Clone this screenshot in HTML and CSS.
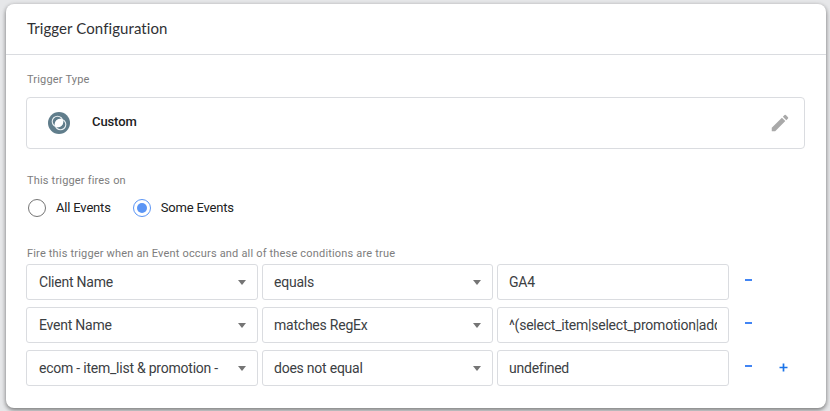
FILE: index.html
```html
<!DOCTYPE html>
<html lang="en">
<head>
<meta charset="utf-8">
<title>Trigger Configuration</title>
<link rel="stylesheet" href="styles.css">
</head>
<body>
<main class="card">
  <header class="card-header"><h1 class="title">Trigger Configuration</h1></header>
  <div class="card-body">
    <div class="label">Trigger Type</div>
    <div class="type-box">
      <svg class="type-icon" width="22" height="22" viewBox="0 0 22 22">
        <circle cx="11" cy="11" r="11" fill="#607d8b"/>
        <circle cx="12.5" cy="12.5" r="5.3" fill="none" stroke="#e8eef0" stroke-width="1.1"/>
        <circle cx="9.5" cy="9.5" r="5.3" fill="none" stroke="#e8eef0" stroke-width="1.1"/>
        <path d="M14.5 7.5A5.2 5.2 0 0 1 7.5 14.5A5.2 5.2 0 0 1 14.5 7.5Z" fill="#fff"/>
      </svg>
      <span class="type-name">Custom</span>
      <svg class="edit-icon" width="22" height="22" viewBox="0 0 24 24"><path fill="#a9a9a9" d="M3 17.25V21h3.75L17.81 9.94l-3.75-3.75L3 17.25zM20.71 7.04a1 1 0 0 0 0-1.41l-2.34-2.34a1 1 0 0 0-1.41 0l-1.83 1.83 3.75 3.75 1.83-1.83z"/></svg>
    </div>
    <div class="label fires-label">This trigger fires on</div>
    <div class="radios">
      <div class="radio"><span class="ring"></span><span>All Events</span></div>
      <div class="radio"><span class="ring ring-on"></span><span>Some Events</span></div>
    </div>
    <div class="label cond-label">Fire this trigger when an Event occurs and all of these conditions are true</div>
    <div class="conditions">
      <div class="row">
        <div class="field select"><span class="value">Client Name</span><i class="arrow"></i></div>
        <div class="field select"><span class="value">equals</span><i class="arrow"></i></div>
        <div class="field"><span class="value">GA4</span></div>
        <span class="minus"></span>
      </div>
      <div class="row">
        <div class="field select"><span class="value">Event Name</span><i class="arrow"></i></div>
        <div class="field select"><span class="value">matches RegEx</span><i class="arrow"></i></div>
        <div class="field"><span class="value">^(select_item|select_promotion|add</span></div>
        <span class="minus"></span>
      </div>
      <div class="row">
        <div class="field select"><span class="value">ecom - item_list &amp; promotion -</span><i class="arrow"></i></div>
        <div class="field select"><span class="value">does not equal</span><i class="arrow"></i></div>
        <div class="field"><span class="value">undefined</span></div>
        <span class="minus"></span>
        <svg class="plus" width="9" height="9" viewBox="0 0 9 9"><path d="M4.5 0.5v8M0.5 4.5h8" stroke="#1a73e8" stroke-width="1.7"/></svg>
      </div>
    </div>
  </div>
</main>
</body>
</html>
```
FILE: styles.css
```css
* { box-sizing: border-box; }
body {
  margin: 0;
  height: 411px;
  overflow: hidden;
  padding: 4px 4px 3px 5.5px;
  background: #e6e7e9;
  font-family: Roboto, "Liberation Sans", sans-serif;
  color: #212121;
}
.card {
  height: 404px;
  background: #fff;
  border-radius: 8px;
  box-shadow: 0 2px 4px rgba(0, 0, 0, .4), 0 1px 5px rgba(0, 0, 0, .15);
}
.card-header {
  height: 51px;
  padding: 14px 0 0 21.5px;
  border-bottom: 1px solid #dadce0;
}
.title {
  margin: 0;
  font: 400 15px/20px Lato, Roboto, sans-serif;
  letter-spacing: .08px;
  color: #303134;
}
.card-body { padding: 17px 21px 0 20.5px; }
.label {
  padding-left: 1px;
  font-size: 11px;
  line-height: 16px;
  letter-spacing: .18px;
  color: #7d7d7d;
}
.type-box {
  display: flex;
  align-items: center;
  width: 779px;
  height: 52px;
  margin-top: 9px;
  padding: 0 13.5px 0 21px;
  border: 1px solid #dadce0;
  border-radius: 4px;
}
.type-icon { margin-right: 22px; }
.type-name { font-size: 13px; font-weight: 500; line-height: 18px; letter-spacing: -.1px; margin-top: -3px; }
.edit-icon { margin-left: auto; }
.fires-label { margin-top: 24px; }
.radios {
  display: flex;
  gap: 22px;
  height: 20px;
  margin: 9px 0 0 2px;
}
.radio { display: flex; align-items: center; gap: 10px; font-size: 13px; line-height: 18px; letter-spacing: -.18px; }
.ring {
  display: flex;
  align-items: center;
  justify-content: center;
  width: 18px;
  height: 18px;
  border: 1px solid #757575;
  border-radius: 50%;
}
.ring-on { border-color: #5b95f5; }
.ring-on::after { content: ""; width: 10px; height: 10px; border-radius: 50%; background: #5b95f5; }
.cond-label { margin-top: 28px; }
.conditions { display: flex; flex-direction: column; gap: 7px; margin-top: 2px; }
.row { display: flex; gap: 4px; height: 36px; }
.field {
  display: flex;
  align-items: center;
  width: 231px;
  padding: 0 11px;
  border: 1px solid #dadce0;
  border-radius: 3px;
}
.field:first-child { width: 232px; padding-left: 12px; }
.field:nth-child(3) { width: 232px; padding-right: 11px; }
.value {
  flex: 1;
  overflow: hidden;
  white-space: nowrap;
  font-size: 14px;
  line-height: 20px;
  letter-spacing: -.23px;
  color: #3c4043;
}
.arrow {
  margin-left: 14px;
  border: 4.5px solid transparent;
  border-top: 5px solid #757575;
  border-bottom: 0;
}
.minus { width: 7px; height: 2px; margin: 15px 0 0 12px; background: #4285f4; }
.plus { margin: 13px 0 0 23px; }
```
